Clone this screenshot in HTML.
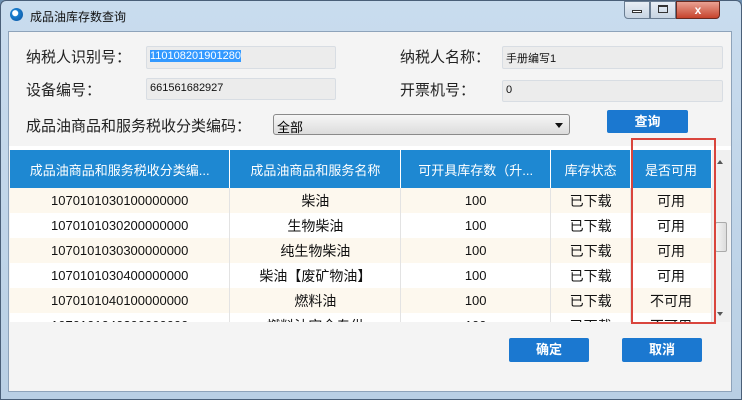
<!DOCTYPE html>
<html><head><meta charset="utf-8"><style>
*{margin:0;padding:0;box-sizing:border-box}
body{width:742px;height:400px;overflow:hidden;background:#6d8fb0;font-family:"Liberation Sans","Noto Sans CJK SC",sans-serif;position:relative}
.frame{position:absolute;left:0;top:0;width:742px;height:400px;background:linear-gradient(#c9dcee,#b9cfe4);border:1px solid #4a5f78;border-radius:6px 6px 0 0}
.client{position:absolute;left:8px;top:31px;width:724px;height:361px;background:#f4f4f4;border:1px solid #8ea3ba}
.a{position:absolute;white-space:nowrap}
.lbl{font-size:15px;color:#222}
.inp{position:absolute;background:#ececec;border:1px solid #d8dde3;border-radius:2px;font-size:11px;padding:3px 3px;color:#111}
.btn{position:absolute;background:#1b78d0;color:#fff;font-size:13px;font-weight:bold;text-align:center;border-radius:2px}
.tw{position:absolute;left:10px;top:150px;width:702px;height:172px;overflow:hidden}
table{border-collapse:collapse;font-size:13px}
th{background:#1e88d2;color:#fff;font-weight:normal;height:38px;border-right:1px solid #fff;font-size:13px}
td{height:25px;text-align:center;border-right:1px solid #e3e3e3;color:#111}
tr.o td{background:#fdf8ee}tr.e td{background:#fff}
</style></head><body>
<div class="frame"></div>
<div class="a" style="left:10px;top:8px;width:13px;height:13px;border-radius:50%;background:radial-gradient(circle at 40% 40%,#fff 0 25%,#1a7fd0 30%,#0b4f9a)"></div>
<div class="a" style="left:30px;top:8px;font-size:12px;color:#111">成品油库存数查询</div>
<div class="a" style="left:624px;top:1px;width:26px;height:18px;border:1px solid #6a7d92;border-radius:0 0 0 4px;background:linear-gradient(#e8eef5,#c7d4e2)"></div>
<div class="a" style="left:632px;top:10px;width:10px;height:3px;border:1px solid #333;background:#fff"></div>
<div class="a" style="left:650px;top:1px;width:26px;height:18px;border:1px solid #6a7d92;background:linear-gradient(#e8eef5,#c7d4e2)"></div>
<div class="a" style="left:658px;top:5px;width:10px;height:8px;border:1px solid #333;border-top-width:2px"></div>
<div class="a" style="left:676px;top:1px;width:44px;height:18px;border:1px solid #6a2a20;border-radius:0 0 4px 0;background:linear-gradient(#e9a293,#c6432c);color:#fff;font-size:12px;font-weight:bold;text-align:center;line-height:16px">x</div>
<div class="client"></div>
<div class="a lbl" style="left:26px;top:46px">纳税人识别号：</div>
<div class="inp" style="left:146px;top:46px;width:190px;height:23px"><span style="background:#3399ff;color:#fff">110108201901280</span></div>
<div class="a lbl" style="left:26px;top:79px">设备编号：</div>
<div class="inp" style="left:146px;top:78px;width:190px;height:22px">661561682927</div>
<div class="a lbl" style="left:400px;top:46px">纳税人名称：</div>
<div class="inp" style="left:502px;top:46px;width:221px;height:23px">手册编写1</div>
<div class="a lbl" style="left:400px;top:79px">开票机号：</div>
<div class="inp" style="left:502px;top:80px;width:221px;height:22px">0</div>
<div class="a lbl" style="left:26px;top:115px">成品油商品和服务税收分类编码：</div>
<div class="a" style="left:273px;top:114px;width:297px;height:21px;border:1px solid #8a8a8a;border-radius:3px;background:linear-gradient(#f6f6f6,#dcdcdc);font-size:13px;padding:2px 3px">全部<span style="position:absolute;right:6px;top:8px;border:4px solid transparent;border-top:5px solid #111"></span></div>
<div class="btn" style="left:607px;top:110px;width:81px;height:23px;line-height:23px">查询</div>
<div class="a" style="left:9px;top:146px;width:722px;height:4px;background:#fff"></div>
<div class="a" style="left:9px;top:322px;width:722px;height:69px;background:#f4f4f4"></div>
<div class="tw">
<table>
<tr><th style="width:220px">成品油商品和服务税收分类编...</th><th style="width:171px">成品油商品和服务名称</th><th style="width:150px">可开具库存数（升...</th><th style="width:80px">库存状态</th><th style="width:81px">是否可用</th></tr>
<tr class="o"><td>1070101030100000000</td><td style="font-size:14px">柴油</td><td>100</td><td style="font-size:14px">已下载</td><td style="font-size:14px">可用</td></tr>
<tr class="e"><td>1070101030200000000</td><td style="font-size:14px">生物柴油</td><td>100</td><td style="font-size:14px">已下载</td><td style="font-size:14px">可用</td></tr>
<tr class="o"><td>1070101030300000000</td><td style="font-size:14px">纯生物柴油</td><td>100</td><td style="font-size:14px">已下载</td><td style="font-size:14px">可用</td></tr>
<tr class="e"><td>1070101030400000000</td><td style="font-size:14px">柴油【废矿物油】</td><td>100</td><td style="font-size:14px">已下载</td><td style="font-size:14px">可用</td></tr>
<tr class="o"><td>1070101040100000000</td><td style="font-size:14px">燃料油</td><td>100</td><td style="font-size:14px">已下载</td><td style="font-size:14px">不可用</td></tr>
<tr class="e"><td>1070101040200000000</td><td style="font-size:14px">燃料油完全专供</td><td>100</td><td style="font-size:14px">已下载</td><td style="font-size:14px">不可用</td></tr>
</table>
</div>
<div class="a" style="left:712px;top:150px;width:18px;height:172px;background:#f0f0f0"></div>
<div class="a" style="left:717px;top:157px;border:3px solid transparent;border-bottom:4px solid #555"></div>
<div class="a" style="left:717px;top:312px;border:3px solid transparent;border-top:4px solid #555"></div>
<div class="a" style="left:715px;top:222px;width:12px;height:30px;border:1px solid #aaa;border-radius:2px;background:linear-gradient(90deg,#f4f4f4,#ddd)"></div>
<div class="a" style="left:631px;top:138px;width:85px;height:186px;border:2px solid #d9453d"></div>
<div class="btn" style="left:509px;top:338px;width:80px;height:24px;line-height:24px">确定</div>
<div class="btn" style="left:622px;top:338px;width:80px;height:24px;line-height:24px">取消</div>
</body></html>
